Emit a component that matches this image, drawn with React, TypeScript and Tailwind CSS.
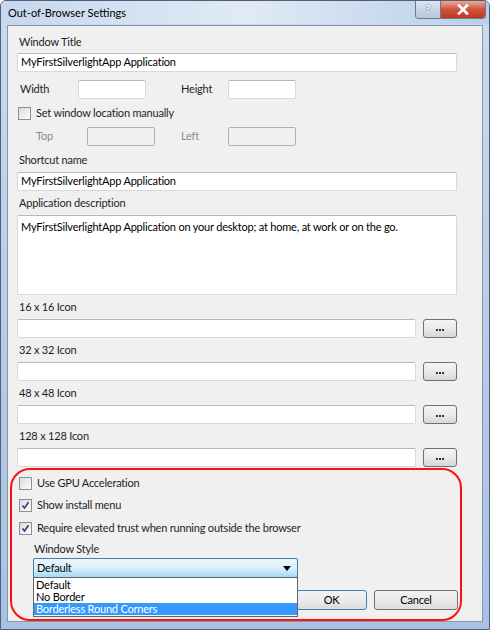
import React from "react";

const font = { fontFamily: 'Lato, "Open Sans", "Liberation Sans", sans-serif' };

function Label({ children, className = "" }: { children: React.ReactNode; className?: string }) {
  return <div className={"h-[18px] flex items-center pl-[2px] text-[11px] text-[#1e1e1e] " + className}>{children}</div>;
}

function TextBox({ value = "", className = "" }: { value?: string; className?: string }) {
  return (
    <div
      className={
        "h-[19px] bg-white border border-[#d5d9de] border-t-[#b5b9bf] rounded-[2px] flex items-center px-[3px] text-[11px] text-black " +
        className
      }
    >
      {value}
    </div>
  );
}

function CheckBox({ checked, label }: { checked?: boolean; label: string }) {
  return (
    <div className="flex items-center gap-[5px] h-[18px] text-[11px] text-[#1e1e1e]">
      <span className="w-[13px] h-[13px] border border-[#8e8f8f] bg-gradient-to-br from-[#dcdcdc] to-[#fbfbfb] flex items-center justify-center">
        {checked && (
          <svg width="9" height="9" viewBox="0 0 9 9">
            <path d="M1.5 4.5 L3.5 7 L7.5 1.2" fill="none" stroke="#2a3f7a" strokeWidth="1.6" />
          </svg>
        )}
      </span>
      <span>{label}</span>
    </div>
  );
}

function Browse() {
  return (
    <button className="w-[34px] h-[19px] rounded-[3px] border border-[#707070] bg-gradient-to-b from-[#f4f4f4] via-[#ebebeb] to-[#d6d6d6] flex items-end justify-center gap-[1px] pb-[6px]">
      <span className="w-[2px] h-[2px] bg-[#333]" />
      <span className="w-[2px] h-[2px] bg-[#333]" />
      <span className="w-[2px] h-[2px] bg-[#333]" />
    </button>
  );
}

function IconRow({ label }: { label: string }) {
  return (
    <>
      <Label className="mt-[3px]">{label}</Label>
      <div className="flex items-center gap-[7px] mt-[3px]">
        <TextBox className="flex-1" />
        <Browse />
      </div>
    </>
  );
}

export default function App() {
  return (
    <div style={font} className="w-[490px] h-[630px] flex flex-col tracking-[-0.2px] bg-gradient-to-b from-[#c9dbef] via-[#b7cde8] to-[#a8c2e2] border border-[#4f5f75] rounded-t-[6px] overflow-hidden">
      <div className="h-[23px] flex items-start relative bg-gradient-to-r from-[#c6d8ee] via-[#e0eaf5] to-[#b9cfe8]">
        <span className="pl-[7px] pt-[4px] text-[11px] tracking-normal text-black">Out-of-Browser Settings</span>
        <div className="ml-auto mr-[3px] flex h-[18px] rounded-b-[4px] overflow-hidden border border-t-0 border-[#6a7a90]">
          <div className="w-[25px] flex items-center justify-center bg-gradient-to-b from-[#dce6f2] to-[#b7c6d8] text-[11px] font-bold text-white [text-shadow:0_0_2px_#3a4a60] border-r border-[#6a7a90]">
            ?
          </div>
          <div className="w-[44px] flex items-center justify-center bg-gradient-to-b from-[#e9a99a] via-[#d0533d] to-[#c0361f]">
            <svg width="12" height="11" viewBox="0 0 12 11">
              <path d="M2 1.5 L10 9.5 M10 1.5 L2 9.5" stroke="#ffffff" strokeWidth="2.6" strokeLinecap="square" />
            </svg>
          </div>
        </div>
      </div>
      <div className="flex-1 mx-[6px] mt-[1px] mb-[7px] bg-[#f0f0f0] border border-[#8797ab] flex flex-col pl-[9px] pr-[25px] pt-[7px]">
        <Label>Window Title</Label>
        <TextBox value="MyFirstSilverlightApp Application" className="mt-[2px]" />
        <div className="flex items-center mt-[8px] h-[19px]">
          <span className="w-[61px] pl-[3px] text-[11px] text-[#1e1e1e]">Width</span>
          <TextBox className="w-[68px]" />
          <span className="ml-[35px] w-[47px] text-[11px] text-[#1e1e1e]">Height</span>
          <TextBox className="w-[68px]" />
        </div>
        <div className="mt-[5px] pl-[1px]">
          <CheckBox label="Set window location manually" />
        </div>
        <div className="flex items-center mt-[5px] h-[19px]">
          <span className="w-[70px] pl-[19px] text-[11px] text-[#8a8a8a]">Top</span>
          <div className="w-[68px] h-[19px] border border-[#b0b0b0] rounded-[2px] bg-[#f0f0f0]" />
          <span className="ml-[26px] w-[47px] text-[11px] text-[#8a8a8a]">Left</span>
          <div className="w-[68px] h-[19px] border border-[#b0b0b0] rounded-[2px] bg-[#f0f0f0]" />
        </div>
        <Label className="mt-[5px]">Shortcut name</Label>
        <TextBox value="MyFirstSilverlightApp Application" className="mt-[3px]" />
        <Label className="mt-[3px]">Application description</Label>
        <div className="mt-[3px] h-[80px] bg-white border border-[#d5d9de] border-t-[#b5b9bf] rounded-[2px] px-[3px] pt-[3px] text-[11px] text-black leading-[15px]">
          MyFirstSilverlightApp Application on your desktop; at home, at work or on the go.
        </div>
        <IconRow label="16 x 16 Icon" />
        <IconRow label="32 x 32 Icon" />
        <IconRow label="48 x 48 Icon" />
        <IconRow label="128 x 128 Icon" />
        <div className="-ml-[7px] -mr-[5px] mt-[1px] h-[153px] border-2 border-[#ff1010] rounded-[20px] pl-[7px] pt-[4px] flex flex-col relative">
          <CheckBox label="Use GPU Acceleration" />
          <div className="mt-[4px]">
            <CheckBox checked label="Show install menu" />
          </div>
          <div className="mt-[5px]">
            <CheckBox checked label="Require elevated trust when running outside the browser" />
          </div>
          <div className="mt-[3px] pl-[15px] h-[18px] flex items-center text-[11px] text-[#1e1e1e]">Window Style</div>
          <div className="ml-[14px] w-[265px] h-[20px] border border-[#3c7fb1] rounded-[2px] bg-gradient-to-b from-[#eaf6fd] via-[#d9f0fc] to-[#a7d9f5] flex items-center px-[3px] text-[11px] text-black relative">
            Default
            <svg className="ml-auto mr-[3px]" width="8" height="5" viewBox="0 0 8 5">
              <path d="M0 0 L8 0 L4 5 Z" fill="#000" />
            </svg>
            <div className="absolute left-[-1px] top-[18px] w-[265px] bg-white border border-[#646464] text-[11px] leading-[12px] z-10 pb-[1px]">
              <div className="px-[2px] h-[12px] mt-[1px]">Default</div>
              <div className="px-[2px] h-[12px]">No Border</div>
              <div className="px-[2px] h-[12px] bg-[#3399ff] text-white">Borderless Round Corners</div>
            </div>
          </div>
          <div className="flex justify-end gap-[7px] mt-[12px] pr-[2px]">
            <button className="w-[71px] h-[20px] rounded-[3px] border border-[#3c7fb1] bg-gradient-to-b from-[#f2f2f2] via-[#ebebeb] to-[#dddddd] text-[11px] text-black">
              OK
            </button>
            <button className="w-[84px] h-[20px] rounded-[3px] border border-[#707070] bg-gradient-to-b from-[#f2f2f2] via-[#ebebeb] to-[#dddddd] text-[11px] text-black">
              Cancel
            </button>
          </div>
        </div>
      </div>
    </div>
  );
}
